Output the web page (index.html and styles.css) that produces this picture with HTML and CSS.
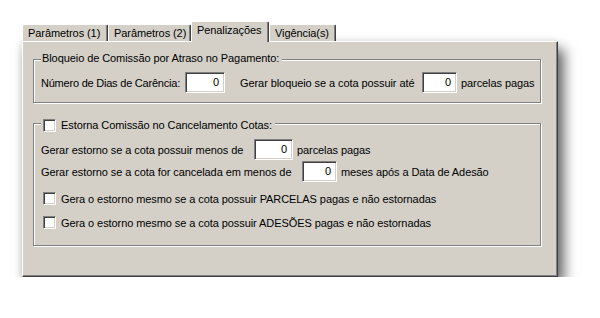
FILE: index.html
```html
<!DOCTYPE html>
<html>
<head>
<meta charset="utf-8">
<link rel="stylesheet" href="styles.css">
</head>
<body>
<div class="window">
  <div class="tabs">
    <div class="tab t1">Parâmetros (1)</div>
    <div class="tab t2">Parâmetros (2)</div>
    <div class="tab t3 active">Penalizações</div>
    <div class="tab t4">Vigência(s)</div>
  </div>
  <div class="panel">
    <div class="group g1">
      <div class="title">Bloqueio de Comissão por Atraso no Pagamento:</div>
      <div class="row r1">
        <span class="lb l1">Número de Dias de Carência:</span>
        <span class="num w40">0</span>
        <span class="lb l2">Gerar bloqueio se a cota possuir até</span>
        <span class="num w35">0</span>
        <span>parcelas pagas</span>
      </div>
    </div>
    <div class="group g2">
      <div class="title"><span class="chk"></span><span>Estorna Comissão no Cancelamento Cotas:</span></div>
      <div class="row r1">
        <span class="lb l3">Gerar estorno se a cota possuir menos de</span>
        <span class="num w39">0</span>
        <span>parcelas pagas</span>
      </div>
      <div class="row r2">
        <span class="lb l4">Gerar estorno se a cota for cancelada em menos de</span>
        <span class="num w35">0</span>
        <span>meses após a Data de Adesão</span>
      </div>
      <div class="row r3">
        <span class="chk"></span>
        <span>Gera o estorno mesmo se a cota possuir PARCELAS pagas e não estornadas</span>
      </div>
      <div class="row r4">
        <span class="chk"></span>
        <span>Gera o estorno mesmo se a cota possuir ADESÕES pagas e não estornadas</span>
      </div>
    </div>
  </div>
</div>
</body>
</html>
```
FILE: styles.css
```css
html, body {
  margin: 0;
  background: #fff;
}
body {
  font: 11px "Liberation Sans", Arial, sans-serif;
  letter-spacing: -0.08px;
  color: #000;
}
.window {
  padding: 21px 0 0 22px;
  width: 536px;
}
.tabs {
  display: flex;
  align-items: flex-end;
  height: 20px;
  position: relative;
  z-index: 1;
}
.tab {
  box-sizing: border-box;
  height: 17px;
  line-height: 17px;
  padding: 0 0 0 5px;
  background: #d4d0c8;
  border-top: 1px solid #fff;
  border-left: 1px solid #fff;
  border-right: 1px solid #404040;
  box-shadow: inset -1px 0 #808080;
  border-radius: 2px 2px 0 0;
  white-space: nowrap;
  overflow: hidden;
}
.t1 { width: 86px; }
.t2 { width: 83px; }
.t3 { width: 78px; }
.t4 { width: 67px; }
.tab.active {
  height: 21px;
  line-height: 16px;
  margin-bottom: -1px;
}
.panel {
  box-sizing: border-box;
  width: 536px;
  height: 236px;
  background: #d4d0c8;
  border-top: 1px solid #fff;
  border-left: 1px solid #fff;
  border-right: 1px solid #404040;
  border-bottom: 1px solid #404040;
  box-shadow: inset -1px -1px #808080, 6px 8px 12px rgba(0,0,0,.6), -2px 0 6px rgba(0,0,0,.1);
  overflow: hidden;
}
.group {
  box-sizing: border-box;
  width: 508px;
  margin-left: 10px;
  border: 1px solid #808080;
  box-shadow: 1px 1px 0 #fff, inset 1px 1px 0 #fff;
  padding-left: 7px;
}
.g1 {
  margin-top: 17px;
  height: 44px;
}
.g2 {
  margin-top: 20px;
  height: 123px;
}
.title {
  display: flex;
  align-items: center;
  width: fit-content;
  height: 13px;
  line-height: 13px;
  background: #d4d0c8;
  white-space: nowrap;
}
.g1 .title {
  margin-top: -8px;
  padding: 0 3px 0 1px;
}
.g2 .title {
  margin-top: -5px;
  padding: 0 3px 0 2px;
  gap: 5px;
}
.row {
  display: flex;
  align-items: center;
  height: 21px;
  gap: 4px;
  white-space: nowrap;
}
.lb { flex: none; }
.l1 { width: 140px; letter-spacing: -0.22px; }
.l2 { width: 178px; margin-left: 11px; }
.l3 { width: 209px; }
.l4 { width: 257px; }
.g1 .r1 { margin-top: 7px; }
.g2 .r1 { margin-top: 7px; }
.g2 .r2 { margin-top: 1px; }
.g2 .r3 { margin-top: 6px; }
.g2 .r4 { margin-top: 3px; }
.r3, .r4 { padding-left: 2px; gap: 5px; }
.num {
  box-sizing: border-box;
  flex: none;
  height: 21px;
  line-height: 19px;
  background: #fff;
  color: #000;
  border-top: 1px solid #808080;
  border-left: 1px solid #808080;
  border-right: 1px solid #fff;
  border-bottom: 1px solid #fff;
  box-shadow: inset 1px 1px #404040, inset -1px -1px #d4d0c8;
  text-align: right;
  padding-right: 5px;
}
.w40 { width: 40px; }
.w39 { width: 39px; }
.w35 { width: 35px; }
.chk {
  box-sizing: border-box;
  display: block;
  width: 13px;
  height: 13px;
  background: #fff;
  border-top: 1px solid #808080;
  border-left: 1px solid #808080;
  border-right: 1px solid #fff;
  border-bottom: 1px solid #fff;
  box-shadow: inset 1px 1px #404040, inset -1px -1px #d4d0c8;
  flex: none;
}
```
